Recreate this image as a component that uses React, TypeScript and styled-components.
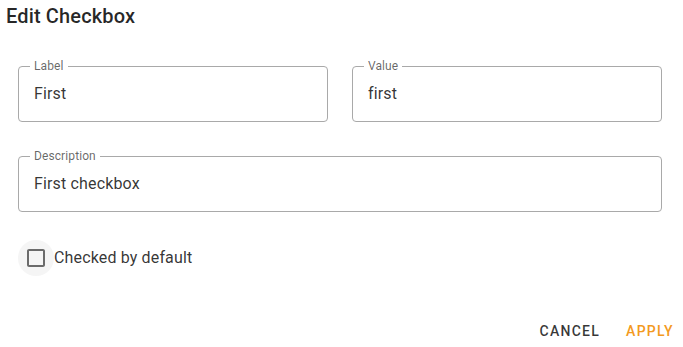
import { FC } from 'react';
import styled, { createGlobalStyle } from 'styled-components';

const GlobalStyle = createGlobalStyle`
  html, body {
    margin: 0;
    padding: 0;
    background: #fff;
  }
  body {
    font-family: Roboto, 'Liberation Sans', sans-serif;
    color: rgba(0, 0, 0, 0.87);
  }
`;

type FieldProps = {
  label: string;
  value: string;
};

const OutlinedField: FC<FieldProps> = ({ label, value }) => (
  <StyledField>
    <FieldLabel>{label}</FieldLabel>
    <FieldValue>{value}</FieldValue>
  </StyledField>
);

const CheckboxIcon = () => (
  <svg width="24" height="24" viewBox="0 0 24 24" fill="currentColor">
    <path d="M19 5v14H5V5h14m0-2H5c-1.1 0-2 .9-2 2v14c0 1.1.9 2 2 2h14c1.1 0 2-.9 2-2V5c0-1.1-.9-2-2-2z" />
  </svg>
);

export default function App() {
  return (
    <>
      <GlobalStyle />
      <StyledDialog>
        <Title>Edit Checkbox</Title>
        <Form>
          <FieldGrid>
            <OutlinedField label="Label" value="First" />
            <OutlinedField label="Value" value="first" />
            <Wide>
              <OutlinedField label="Description" value="First checkbox" />
            </Wide>
          </FieldGrid>
          <CheckRow>
            <CheckCircle>
              <CheckboxIcon />
            </CheckCircle>
            <CheckText>Checked by default</CheckText>
          </CheckRow>
        </Form>
        <Actions>
          <Button>Cancel</Button>
          <Button $primary>Apply</Button>
        </Actions>
      </StyledDialog>
    </>
  );
}

const StyledDialog = styled.div`
  width: 683px;
  height: 347px;
  overflow: hidden;
  display: flex;
  flex-direction: column;
`;

const Title = styled.h2`
  margin: 0;
  padding: 0 0 0 6px;
  font-size: 20px;
  line-height: 32px;
  font-weight: 500;
  letter-spacing: 0.15px;
  color: rgba(0, 0, 0, 0.85);
`;

const Form = styled.div`
  padding: 34px 21px 0 18px;
`;

const FieldGrid = styled.div`
  display: grid;
  grid-template-columns: 310px 310px;
  column-gap: 24px;
  row-gap: 34px;
`;

const Wide = styled.div`
  grid-column: 1 / -1;
`;

const StyledField = styled.div`
  position: relative;
  box-sizing: border-box;
  height: 56px;
  border: 1px solid #a9a9a9;
  border-radius: 4px;
  padding: 0 14px 0 15px;
  display: flex;
  align-items: center;
`;

const FieldLabel = styled.span`
  position: absolute;
  top: -7px;
  left: 11px;
  padding: 0 4px;
  background: #fff;
  font-size: 12px;
  line-height: 12px;
  color: rgba(0, 0, 0, 0.6);
  letter-spacing: 0.1px;
`;

const FieldValue = styled.span`
  font-size: 16px;
  line-height: 24px;
  color: rgba(0, 0, 0, 0.8);
  letter-spacing: 0.15px;
`;

const CheckRow = styled.label`
  margin-top: 28px;
  display: flex;
  align-items: center;
`;

const CheckCircle = styled.span`
  width: 36px;
  height: 36px;
  border-radius: 50%;
  background: #f5f5f5;
  display: flex;
  align-items: center;
  justify-content: center;
  color: #6b6b6b;
`;

const CheckText = styled.span`
  font-size: 16px;
  line-height: 24px;
  letter-spacing: 0.15px;
  color: rgba(0, 0, 0, 0.8);
`;

const Actions = styled.div`
  margin-top: 37px;
  display: flex;
  justify-content: flex-end;
  gap: 10px;
  padding-right: 1px;
`;

const Button = styled.button<{ $primary?: boolean }>`
  min-width: 64px;
  height: 36px;
  padding: 6px 8px;
  border: none;
  background: transparent;
  font-family: Roboto, 'Liberation Sans', sans-serif;
  font-size: 14px;
  font-weight: 500;
  letter-spacing: 1.25px;
  text-transform: uppercase;
  color: ${(p) => (p.$primary ? '#f39a1e' : 'rgba(0, 0, 0, 0.78)')};
  cursor: pointer;
`;
